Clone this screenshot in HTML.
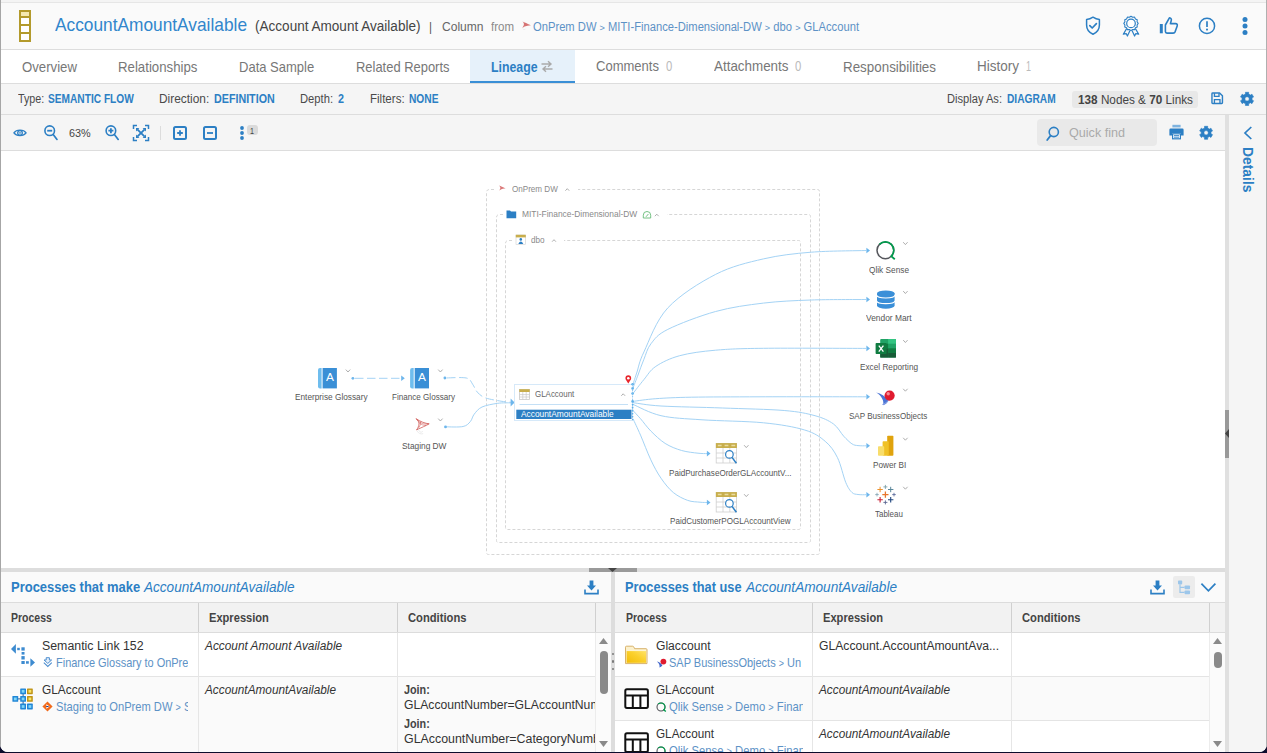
<!DOCTYPE html><html lang="en"><head><meta charset="utf-8"><title>AccountAmountAvailable - Lineage</title><style>

html,body{margin:0;padding:0;}
body{width:1267px;height:753px;overflow:hidden;background:#0c0c2c;font-family:"Liberation Sans",sans-serif;}
#win{position:absolute;left:0;top:0;width:1267px;height:752px;overflow:hidden;background:#fff;border-radius:0 0 8px 8px;}
#win div,#win svg,#win span.t{position:absolute;}
#win svg{overflow:visible;}
span.t{white-space:nowrap;transform-origin:0 0;display:block;}
span.t b{font-weight:bold;}
.gt{font-size:82%;position:relative;top:-0.5px;}
.edgeL{left:0;top:0;width:1px;height:752px;background:#a6a6a6;}
.edgeR{left:1266px;top:0;width:1px;height:752px;background:#b0b0b0;}

</style></head><body><div id="win">
<div style="left:1px;top:0px;width:1265px;height:2px;background:#f4f4f4;"></div>
<div style="left:1px;top:2px;width:1265px;height:1px;background:#e6e6e6;"></div>
<div style="left:1px;top:3px;width:1265px;height:46px;background:#fafafa;"></div>
<div style="left:1px;top:49px;width:1265px;height:1px;background:#dddddd;"></div>
<div style="left:1px;top:50px;width:1265px;height:33px;background:#ffffff;"></div>
<div style="left:1px;top:83px;width:1265px;height:1px;background:#dddddd;"></div>
<div style="left:1px;top:84px;width:1265px;height:30px;background:#f5f5f5;"></div>
<div style="left:1px;top:114px;width:1265px;height:1px;background:#dddddd;"></div>
<div style="left:1px;top:115px;width:1224px;height:35px;background:#f5f5f5;"></div>
<div style="left:1px;top:150px;width:1224px;height:1px;background:#dddddd;"></div>
<div style="left:1225px;top:115px;width:4px;height:638px;background:#e0e0e0;"></div>
<div style="left:1229px;top:115px;width:37px;height:638px;background:#f5f5f5;"></div>
<div style="left:1225px;top:410px;width:4px;height:48px;background:#999999;"></div>
<div style="left:1225px;top:429px;width:4px;height:9px;background:#444;clip-path:polygon(100% 0,0 50%,100% 100%);"></div>
<svg style="left:19px;top:10px;" width="12" height="32" viewBox="0 0 12 32"><rect x="1" y="1" width="10" height="30" fill="#fff" stroke="#b39a2c" stroke-width="2"/><rect x="2" y="2" width="8" height="4" fill="#f5e9b0"/><path d="M1 7H11M1 15H11M1 23H11" stroke="#b39a2c" stroke-width="2"/></svg>
<span class="t" style="left:55px;top:14.03px;font-size:18.5px;line-height:22.2px;color:#3186cc;font-family:'Liberation Sans',sans-serif;transform:scaleX(0.9350);">AccountAmountAvailable</span>
<span class="t" style="left:254.5px;top:18.02px;font-size:14px;line-height:16.8px;color:#444;font-family:'Liberation Sans',sans-serif;transform:scaleX(0.9681);">(Account Amount Available)</span>
<span class="t" style="left:428.5px;top:19.03px;font-size:13px;line-height:15.6px;color:#555;font-family:'Liberation Sans',sans-serif;transform:scaleX(0.8848);">|</span>
<span class="t" style="left:441.5px;top:19.03px;font-size:13px;line-height:15.6px;color:#666;font-family:'Liberation Sans',sans-serif;transform:scaleX(0.9264);">Column</span>
<span class="t" style="left:491px;top:20.04px;font-size:12px;line-height:14.4px;color:#8a8a8a;font-family:'Liberation Sans',sans-serif;transform:scaleX(0.9583);">from</span>
<svg style="left:521px;top:19px;" width="11" height="11" viewBox="0 0 11 11"><path d="M1.4 2.6 C3.2 3.2 6.6 5 9.9 6.3 C7.4 6.5 5.4 6.9 3.6 7.4 L1.3 8.9 C2.4 7.4 3 6.2 2.9 5 C2.8 4 2.2 3.2 1.4 2.6 Z" fill="#cf5a5a" opacity="0.85"/><path d="M1.6 9.6 C2.2 10.6 3.4 10.8 4.4 10.2" fill="none" stroke="#e6e6e6" stroke-width="0.7"/></svg>
<span class="t" style="left:532.5px;top:20.04px;font-size:12px;line-height:14.4px;color:#5d92c6;font-family:'Liberation Sans',sans-serif;transform:scaleX(0.9331);">OnPrem DW <span class="gt">&gt;</span> MITI-Finance-Dimensional-DW <span class="gt">&gt;</span> dbo <span class="gt">&gt;</span> GLAccount</span>
<svg style="left:1084px;top:15px;" width="18" height="21" viewBox="0 0 18 21"><path d="M9 2.2 C6.8 3.6 4.6 4.3 2.6 4.5 V10 C2.6 14.5 5.3 17.6 9 19.3 C12.7 17.6 15.4 14.5 15.4 10 V4.5 C13.4 4.3 11.2 3.6 9 2.2 Z" fill="none" stroke="#2c7fc4" stroke-width="1.5" stroke-linejoin="round"/><path d="M5.8 10.6 L8.2 13 L12.4 8.6" fill="none" stroke="#2c7fc4" stroke-width="1.7" stroke-linecap="round" stroke-linejoin="round"/></svg>
<svg style="left:1121px;top:15px;" width="20" height="22" viewBox="0 0 20 22"><polygon points="10.00,1.20 11.63,2.31 13.60,2.16 14.45,3.95 16.24,4.80 16.09,6.77 17.20,8.40 16.09,10.03 16.24,12.00 14.45,12.85 13.60,14.64 11.63,14.49 10.00,15.60 8.37,14.49 6.40,14.64 5.55,12.85 3.76,12.00 3.91,10.03 2.80,8.40 3.91,6.77 3.76,4.80 5.55,3.95 6.40,2.16 8.37,2.31" fill="none" stroke="#2c7fc4" stroke-width="1.1" stroke-linejoin="round"/><circle cx="10" cy="8.4" r="4.3" fill="#fff" stroke="#2c7fc4" stroke-width="1.2"/><path d="M5.6 13.6 L2.3 19.2 L5.2 18.6 L6.4 21 L9 15.6 M14.4 13.6 L17.7 19.2 L14.8 18.6 L13.6 21 L11 15.6" fill="none" stroke="#2c7fc4" stroke-width="1.2" stroke-linejoin="round"/></svg>
<svg style="left:1159px;top:16px;" width="20" height="19" viewBox="0 0 20 19"><rect x="0.8" y="8" width="3" height="9.3" fill="#2c7fc4"/><path d="M6.4 9 L10.4 1.8 C12.2 2 12.7 3.4 12.2 4.8 L11.4 7.6 H16.6 C18 7.6 18.6 8.7 18.2 9.9 L16.2 15.6 C15.8 16.6 15.1 17.1 14.1 17.1 H8 C7 17.1 6.4 16.5 6.4 15.6 Z" fill="none" stroke="#2c7fc4" stroke-width="1.6" stroke-linejoin="round"/></svg>
<svg style="left:1197px;top:16px;" width="20" height="20" viewBox="0 0 20 20"><circle cx="10" cy="9.9" r="7.6" fill="none" stroke="#2c7fc4" stroke-width="1.5"/><path d="M10 5.3 V11" stroke="#2c7fc4" stroke-width="1.7"/><circle cx="10" cy="13.6" r="1.05" fill="#2c7fc4"/></svg>
<svg style="left:1241px;top:16px;" width="8" height="20" viewBox="0 0 8 20"><circle cx="4" cy="3.5" r="2.5" fill="#2c7fc4"/><circle cx="4" cy="10" r="2.5" fill="#2c7fc4"/><circle cx="4" cy="16.4" r="2.5" fill="#2c7fc4"/></svg>
<div style="left:470px;top:50px;width:105px;height:33px;background:#e6f1fa;"></div>
<div style="left:470px;top:81px;width:105px;height:2px;background:#3a8fd6;"></div>
<span class="t" style="left:21.5px;top:59.02px;font-size:14.3px;line-height:17.16px;color:#777;font-family:'Liberation Sans',sans-serif;transform:scaleX(0.9229);">Overview</span>
<span class="t" style="left:117.5px;top:59.02px;font-size:14.3px;line-height:17.16px;color:#777;font-family:'Liberation Sans',sans-serif;transform:scaleX(0.9261);">Relationships</span>
<span class="t" style="left:238.5px;top:59.02px;font-size:14.3px;line-height:17.16px;color:#777;font-family:'Liberation Sans',sans-serif;transform:scaleX(0.9098);">Data Sample</span>
<span class="t" style="left:355.5px;top:59.02px;font-size:14.3px;line-height:17.16px;color:#777;font-family:'Liberation Sans',sans-serif;transform:scaleX(0.9050);">Related Reports</span>
<span class="t" style="left:490.5px;top:59.02px;font-size:14.3px;line-height:17.16px;color:#2c7fc4;font-family:'Liberation Sans',sans-serif;font-weight:bold;transform:scaleX(0.8606);">Lineage</span>
<svg style="left:541px;top:60px;" width="12" height="13" viewBox="0 0 12 13"><path d="M0.5 4 H9.5 M7 1.2 L10 4 L7 6.8 M11.5 9 H2.5 M5 6.2 L2 9 L5 11.8" fill="none" stroke="#aaa" stroke-width="1.4"/></svg>
<span class="t" style="left:596px;top:58.02px;font-size:14.3px;line-height:17.16px;color:#777;font-family:'Liberation Sans',sans-serif;transform:scaleX(0.9114);">Comments</span>
<span class="t" style="left:665.5px;top:58.02px;font-size:14px;line-height:16.8px;color:#bbb;font-family:'Liberation Sans',sans-serif;transform:scaleX(0.8080);">0</span>
<span class="t" style="left:713.5px;top:58.02px;font-size:14.3px;line-height:17.16px;color:#777;font-family:'Liberation Sans',sans-serif;transform:scaleX(0.9375);">Attachments</span>
<span class="t" style="left:795px;top:58.02px;font-size:14px;line-height:16.8px;color:#bbb;font-family:'Liberation Sans',sans-serif;transform:scaleX(0.8080);">0</span>
<span class="t" style="left:842.5px;top:59.02px;font-size:14.3px;line-height:17.16px;color:#777;font-family:'Liberation Sans',sans-serif;transform:scaleX(0.9361);">Responsibilities</span>
<span class="t" style="left:976.5px;top:58.02px;font-size:14.3px;line-height:17.16px;color:#777;font-family:'Liberation Sans',sans-serif;transform:scaleX(0.9442);">History</span>
<span class="t" style="left:1025.5px;top:58.02px;font-size:14px;line-height:16.8px;color:#bbb;font-family:'Liberation Sans',sans-serif;transform:scaleX(0.6413);">1</span>
<span class="t" style="left:17.5px;top:92.04px;font-size:12px;line-height:14.4px;color:#4a4a4a;font-family:'Liberation Sans',sans-serif;transform:scaleX(0.8924);">Type:</span>
<span class="t" style="left:48.4px;top:92.04px;font-size:12px;line-height:14.4px;color:#2c7fc4;font-family:'Liberation Sans',sans-serif;font-weight:bold;transform:scaleX(0.8468);">SEMANTIC FLOW</span>
<span class="t" style="left:159px;top:92.04px;font-size:12px;line-height:14.4px;color:#4a4a4a;font-family:'Liberation Sans',sans-serif;transform:scaleX(0.9904);">Direction:</span>
<span class="t" style="left:213.5px;top:92.04px;font-size:12px;line-height:14.4px;color:#2c7fc4;font-family:'Liberation Sans',sans-serif;font-weight:bold;transform:scaleX(0.8926);">DEFINITION</span>
<span class="t" style="left:299.6px;top:92.04px;font-size:12px;line-height:14.4px;color:#4a4a4a;font-family:'Liberation Sans',sans-serif;transform:scaleX(0.9333);">Depth:</span>
<span class="t" style="left:338.4px;top:92.04px;font-size:12px;line-height:14.4px;color:#2c7fc4;font-family:'Liberation Sans',sans-serif;font-weight:bold;transform:scaleX(0.8972);">2</span>
<span class="t" style="left:369.6px;top:92.04px;font-size:12px;line-height:14.4px;color:#4a4a4a;font-family:'Liberation Sans',sans-serif;transform:scaleX(0.9611);">Filters:</span>
<span class="t" style="left:409.2px;top:92.04px;font-size:12px;line-height:14.4px;color:#2c7fc4;font-family:'Liberation Sans',sans-serif;font-weight:bold;transform:scaleX(0.8508);">NONE</span>
<span class="t" style="left:947.3px;top:92.04px;font-size:12px;line-height:14.4px;color:#4a4a4a;font-family:'Liberation Sans',sans-serif;transform:scaleX(0.9266);">Display As:</span>
<span class="t" style="left:1007.2px;top:92.04px;font-size:12px;line-height:14.4px;color:#2c7fc4;font-family:'Liberation Sans',sans-serif;font-weight:bold;transform:scaleX(0.8478);">DIAGRAM</span>
<div style="left:1072px;top:91px;width:126px;height:17px;background:#e8e8e8;border-radius:3px;"></div>
<span class="t" style="left:1077.6px;top:92.03px;font-size:12.8px;line-height:15.36px;color:#444;font-family:'Liberation Sans',sans-serif;transform:scaleX(0.9183);"><b>138</b> Nodes &amp; <b>70</b> Links</span>
<svg style="left:1210.6px;top:92.4px;" width="12.4" height="12.4" viewBox="0 0 13 13"><path d="M1.8 1 H9 L12 4 V11.2 Q12 12 11.2 12 H1.8 Q1 12 1 11.2 V1.8 Q1 1 1.8 1 Z" fill="none" stroke="#2c7fc4" stroke-width="1.5" stroke-linejoin="round"/><path d="M3.6 1.2 V4.6 H8.4 V1.2 M3.6 12 V8 H9.4 V12" fill="none" stroke="#2c7fc4" stroke-width="1.4"/></svg>
<svg style="left:1240px;top:92px;" width="15" height="15" viewBox="0 0 15 15"><path fill-rule="evenodd" fill="#2c7fc4" stroke="#2c7fc4" stroke-width="0.6" stroke-linejoin="round" d="M8.63 11.75 L8.70 13.50 L5.40 13.50 L5.47 11.75 L3.64 10.69 L2.16 11.63 L0.51 8.77 L2.06 7.96 L2.06 5.84 L0.51 5.03 L2.16 2.17 L3.64 3.11 L5.47 2.05 L5.40 0.30 L8.70 0.30 L8.63 2.05 L10.46 3.11 L11.94 2.17 L13.59 5.03 L12.04 5.84 L12.04 7.96 L13.59 8.77 L11.94 11.63 L10.46 10.69 Z M9.25 6.90 A2.2 2.2 0 1 0 4.85 6.90 A2.2 2.2 0 1 0 9.25 6.90 Z"/></svg>
<svg style="left:13px;top:128px;" width="15" height="10" viewBox="0 0 15 10"><path d="M0.9 4.9 C3.4 1.2 10.6 1.2 13.1 4.9 C10.6 8.6 3.4 8.6 0.9 4.9 Z" fill="none" stroke="#2c7fc4" stroke-width="1.3"/><circle cx="7" cy="4.9" r="2.3" fill="none" stroke="#2c7fc4" stroke-width="1.3"/><circle cx="7" cy="4.9" r="0.8" fill="#2c7fc4"/></svg>
<svg style="left:43px;top:124px;" width="16" height="17" viewBox="0 0 16 17"><circle cx="6.7" cy="6.7" r="4.8" fill="none" stroke="#2c7fc4" stroke-width="1.6"/><path d="M10.2 10.4 L14 15.4" stroke="#2c7fc4" stroke-width="1.7" stroke-linecap="round"/><path d="M4.2 6.7 H9.2" stroke="#2c7fc4" stroke-width="1.8"/></svg>
<span class="t" style="left:69.3px;top:127.03px;font-size:11.3px;line-height:13.56px;color:#444;font-family:'Liberation Sans',sans-serif;transform:scaleX(0.9591);">63%</span>
<svg style="left:104px;top:124px;" width="16" height="17" viewBox="0 0 16 17"><circle cx="6.9" cy="6.7" r="4.8" fill="none" stroke="#2c7fc4" stroke-width="1.6"/><path d="M10.4 10.4 L14.2 15.4" stroke="#2c7fc4" stroke-width="1.7" stroke-linecap="round"/><path d="M4.4 6.7 H9.4 M6.9 4.2 V9.2" stroke="#2c7fc4" stroke-width="1.8"/></svg>
<svg style="left:132px;top:124px;" width="18" height="18" viewBox="0 0 18 18"><path d="M1.5 5 V1.5 H5 M13 1.5 H16.5 V5 M16.5 13 V16.5 H13 M5 16.5 H1.5 V13" fill="none" stroke="#2c7fc4" stroke-width="1.5"/><path d="M5.6 5.6 L12.4 12.4 M12.4 5.6 L5.6 12.4" stroke="#2c7fc4" stroke-width="1.8"/><path d="M4 4 H7.4 L4 7.4 Z M14 4 V7.4 L10.6 4 Z M14 14 H10.6 L14 10.6 Z M4 14 V10.6 L7.4 14 Z" fill="#2c7fc4"/></svg>
<div style="left:160px;top:126px;width:1px;height:14px;background:#dcdcdc;"></div>
<svg style="left:173px;top:126px;" width="14" height="14" viewBox="0 0 14 14"><rect x="1" y="1" width="12" height="12" rx="1.5" fill="none" stroke="#2c7fc4" stroke-width="2"/><path d="M4.2 7 H9.8 M7 4.2 V9.8" stroke="#2c7fc4" stroke-width="1.8"/></svg>
<svg style="left:203px;top:126px;" width="14" height="14" viewBox="0 0 14 14"><rect x="1" y="1" width="12" height="12" rx="1.5" fill="none" stroke="#2c7fc4" stroke-width="2"/><path d="M4 7 H10" stroke="#2c7fc4" stroke-width="1.8"/></svg>
<svg style="left:239px;top:125px;" width="6" height="16" viewBox="0 0 6 16"><circle cx="3" cy="3" r="1.9" fill="#2c7fc4"/><circle cx="3" cy="8" r="1.9" fill="#2c7fc4"/><circle cx="3" cy="13" r="1.9" fill="#2c7fc4"/></svg>
<div style="left:247px;top:125px;width:11px;height:10px;background:#dadada;border-radius:3px;"></div>
<span class="t" style="left:250.2px;top:125.03px;font-size:9.5px;line-height:11.4px;color:#444;font-family:'Liberation Sans',sans-serif;transform:scaleX(0.7552);">1</span>
<div style="left:1037px;top:119px;width:120px;height:27px;background:#e9e9e9;border-radius:4px;"></div>
<svg style="left:1046px;top:126px;" width="14" height="15" viewBox="0 0 14 15"><circle cx="7.8" cy="6" r="4.6" fill="none" stroke="#2c7fc4" stroke-width="1.6"/><path d="M4.6 9.6 L1.2 14" stroke="#2c7fc4" stroke-width="1.8" stroke-linecap="round"/></svg>
<span class="t" style="left:1069.3px;top:125.02px;font-size:13.5px;line-height:16.2px;color:#aaa;font-family:'Liberation Sans',sans-serif;transform:scaleX(0.9328);">Quick find</span>
<svg style="left:1169px;top:124px;" width="15" height="16" viewBox="0 0 15 16"><rect x="3.4" y="0.8" width="8.2" height="2.6" fill="#7fb3df"/><path d="M1.6 4.6 H13.4 Q14.6 4.6 14.6 5.8 V11.6 H12 V9 H3 V11.6 H0.4 V5.8 Q0.4 4.6 1.6 4.6 Z" fill="#2c7fc4"/><rect x="3.6" y="9.8" width="7.8" height="5" fill="#fff" stroke="#2c7fc4" stroke-width="1.2"/><path d="M5 11.6 H10 M5 13.2 H10" stroke="#2c7fc4" stroke-width="0.9"/></svg>
<svg style="left:1199px;top:126px;" width="14" height="14" viewBox="0 0 14 14"><path fill-rule="evenodd" fill="#2c7fc4" stroke="#2c7fc4" stroke-width="0.6" stroke-linejoin="round" d="M8.65 11.56 L8.73 13.30 L5.47 13.30 L5.55 11.56 L3.75 10.52 L2.28 11.46 L0.66 8.64 L2.21 7.84 L2.21 5.76 L0.66 4.96 L2.28 2.14 L3.75 3.08 L5.55 2.04 L5.47 0.30 L8.73 0.30 L8.65 2.04 L10.45 3.08 L11.92 2.14 L13.54 4.96 L11.99 5.76 L11.99 7.84 L13.54 8.64 L11.92 11.46 L10.45 10.52 Z M9.30 6.80 A2.2 2.2 0 1 0 4.90 6.80 A2.2 2.2 0 1 0 9.30 6.80 Z"/></svg>
<svg style="left:1243px;top:126px;" width="10" height="14" viewBox="0 0 10 14"><path d="M8.3 1 L2 7 L8.3 13" fill="none" stroke="#2c7fc4" stroke-width="1.7"/></svg>
<span style="position:absolute;left:1239.5px;top:146.5px;writing-mode:vertical-rl;font:bold 14.6px/15px 'Liberation Sans',sans-serif;color:#2c7fc4;white-space:nowrap;transform-origin:0 0;transform:scaleY(0.95);">Details</span>
<svg style="left:0px;top:151px;" width="1225" height="417" viewBox="0 151 1225 417"><path d="M494 189.5 H489.5 Q486.5 189.5 486.5 192.5 V552.5 Q486.5 554.5 488.5 554.5 H817.5 Q819.5 554.5 819.5 552.5 V191.5 Q819.5 189.5 817.5 189.5 H578" fill="none" stroke="#d6d6d6" stroke-width="1" stroke-dasharray="3 2"/><path d="M503 214.5 H499.5 Q496.5 214.5 496.5 217.5 V540.5 Q496.5 542.5 498.5 542.5 H808.5 Q810.5 542.5 810.5 540.5 V216.5 Q810.5 214.5 808.5 214.5 H667" fill="none" stroke="#d6d6d6" stroke-width="1" stroke-dasharray="3 2"/><path d="M512 240.5 H508.5 Q505.5 240.5 505.5 243.5 V527.5 Q505.5 529.5 507.5 529.5 H798.5 Q800.5 529.5 800.5 527.5 V242.5 Q800.5 240.5 798.5 240.5 H564" fill="none" stroke="#d6d6d6" stroke-width="1" stroke-dasharray="3 2"/><path d="M633.0 384.3 C633.7 382.2 635.2 377.4 637.0 372.0 C638.8 366.6 638.8 362.7 643.9 352.0 C649.0 341.3 655.8 320.8 667.8 307.9 C679.8 295.0 699.7 282.6 715.6 274.4 C731.5 266.2 747.5 262.6 763.4 258.9 C779.3 255.2 794.1 253.6 811.2 252.2 C828.3 250.8 856.9 250.8 866.0 250.5" fill="none" stroke="#a4d3f5" stroke-width="1"/><path d="M633.0 388.0 C633.8 385.8 636.2 379.8 638.0 375.0 C639.8 370.2 641.7 364.5 643.9 359.3 C646.1 354.1 647.0 348.7 651.0 343.7 C655.0 338.7 657.0 334.8 667.8 329.4 C678.6 324.0 699.7 315.9 715.6 311.5 C731.5 307.1 747.5 305.0 763.4 303.1 C779.3 301.2 794.1 300.6 811.2 300.0 C828.3 299.4 856.9 299.6 866.0 299.5" fill="none" stroke="#a4d3f5" stroke-width="1"/><path d="M633.0 393.5 C634.8 391.2 640.1 384.1 643.9 379.6 C647.7 375.1 649.8 370.4 655.8 366.4 C661.8 362.4 669.7 358.4 679.7 355.7 C689.7 353.0 701.7 351.4 715.6 350.2 C729.5 349.0 738.3 348.6 763.4 348.3 C788.5 348.0 848.9 348.4 866.0 348.4" fill="none" stroke="#a4d3f5" stroke-width="1"/><path d="M633.0 401.4 C636.8 400.9 646.0 399.4 655.8 398.7 C665.6 398.0 674.3 397.5 691.7 397.2 C709.1 396.9 731.0 396.9 760.0 396.8 C789.0 396.7 848.3 396.8 866.0 396.8" fill="none" stroke="#a4d3f5" stroke-width="1"/><path d="M633.0 402.7 C637.7 403.2 646.1 405.1 661.0 406.0 C675.9 406.9 702.1 407.2 722.6 408.0 C743.1 408.8 768.8 409.2 784.2 410.5 C799.6 411.8 806.8 413.5 815.0 415.7 C823.2 417.9 828.6 420.5 833.4 423.9 C838.2 427.3 840.6 432.9 843.7 436.2 C846.8 439.5 849.5 442.2 851.9 443.8 C854.3 445.4 855.6 445.3 858.0 445.6 C860.4 445.9 864.7 445.8 866.0 445.8" fill="none" stroke="#a4d3f5" stroke-width="1"/><path d="M633.0 404.4 C637.7 406.3 649.5 413.1 661.0 415.7 C672.5 418.3 684.9 418.6 702.0 419.8 C719.1 421.0 746.5 421.1 763.6 422.8 C780.7 424.5 794.4 426.9 804.7 430.0 C815.0 433.1 819.7 436.7 825.2 441.3 C830.7 445.9 834.1 450.9 837.5 457.7 C840.9 464.5 843.3 476.5 845.7 482.3 C848.1 488.1 849.9 490.4 851.9 492.4 C853.9 494.4 855.6 494.1 858.0 494.5 C860.4 494.9 864.7 494.7 866.0 494.7" fill="none" stroke="#a4d3f5" stroke-width="1"/><path d="M633.0 410.5 C634.2 411.9 637.5 415.3 640.5 418.7 C643.5 422.1 646.7 426.9 650.8 431.0 C654.9 435.1 660.0 440.1 665.1 443.4 C670.2 446.6 676.1 448.9 681.6 450.5 C687.1 452.1 693.8 452.7 698.0 453.2 C702.2 453.7 705.5 453.5 707.0 453.6" fill="none" stroke="#a4d3f5" stroke-width="1"/><path d="M633.0 418.7 C634.2 421.4 637.5 428.2 640.5 435.1 C643.5 442.0 647.4 452.6 650.8 459.8 C654.2 467.0 657.2 472.7 661.0 478.2 C664.8 483.7 668.9 488.9 673.4 492.6 C677.9 496.3 683.3 498.8 687.7 500.4 C692.1 502.0 696.8 501.8 700.0 502.2 C703.2 502.6 705.8 502.4 707.0 502.5" fill="none" stroke="#a4d3f5" stroke-width="1"/><path d="M866.4 247.7 L870 250.5 L866.4 253.3 Z" fill="#6db6ec"/><path d="M866.4 296.7 L870 299.5 L866.4 302.3 Z" fill="#6db6ec"/><path d="M866.4 345.59999999999997 L870 348.4 L866.4 351.2 Z" fill="#6db6ec"/><path d="M866.4 394.0 L870 396.8 L866.4 399.6 Z" fill="#6db6ec"/><path d="M866.4 443.0 L870 445.8 L866.4 448.6 Z" fill="#6db6ec"/><path d="M866.4 491.9 L870 494.7 L866.4 497.5 Z" fill="#6db6ec"/><path d="M706.9 450.8 L710.5 453.6 L706.9 456.40000000000003 Z" fill="#6db6ec"/><path d="M706.9 499.7 L710.5 502.5 L706.9 505.3 Z" fill="#6db6ec"/><path d="M353 378.3 H401" fill="none" stroke="#a4d3f5" stroke-width="1" stroke-dasharray="8.5 3.5" stroke-dashoffset="-2"/><path d="M401.2 375.5 L404.8 378.3 L401.2 381.1 Z" fill="#6db6ec"/><circle cx="352.9" cy="378.3" r="1.4" fill="#6db6ec"/><path d="M445.0 378.0 C448.6 378.0 461.7 377.0 466.3 378.0 C470.9 379.0 470.8 381.8 472.6 384.2 C474.4 386.6 475.2 389.8 477.3 392.1 C479.4 394.4 481.2 396.3 485.2 397.8 C489.1 399.3 496.7 400.4 501.0 401.2 C505.3 401.9 509.3 402.1 511.0 402.3" fill="none" stroke="#a4d3f5" stroke-width="1" stroke-dasharray="8.5 3.5" stroke-dashoffset="-2"/><circle cx="444.9" cy="378" r="1.4" fill="#6db6ec"/><path d="M445.7 426.8 C448.6 426.8 459.0 427.4 463.1 426.5 C467.2 425.6 468.5 423.6 470.4 421.5 C472.2 419.4 472.3 416.6 474.2 414.2 C476.1 411.8 478.1 408.8 482.0 407.0 C485.9 405.2 493.0 404.0 497.8 403.3 C502.6 402.6 508.8 402.9 511.0 402.8" fill="none" stroke="#a4d3f5" stroke-width="1"/><circle cx="445.5" cy="426.9" r="1.4" fill="#6db6ec"/><path d="M510.6 398.6 L514.6 402.6 L510.6 406.6 Z" fill="#6db6ec"/><rect x="514.5" y="384.5" width="118" height="36" fill="#fff" stroke="#d6e9f9" stroke-width="1"/><path d="M519.5 404.5 H628" stroke="#c4e0f6" stroke-width="1"/><rect x="516.3" y="409.7" width="115.2" height="9.3" fill="#2c7fc4"/><circle cx="632.6" cy="384.3" r="1.3" fill="#5eb0ea"/><circle cx="632.6" cy="388.4" r="1.3" fill="#5eb0ea"/><circle cx="632.6" cy="393.5" r="1.3" fill="#5eb0ea"/><circle cx="632.6" cy="401.4" r="1.3" fill="#5eb0ea"/><circle cx="632.6" cy="404.6" r="0.9" fill="#5eb0ea"/><circle cx="632.6" cy="407.4" r="0.9" fill="#5eb0ea"/><circle cx="632.6" cy="410.4" r="0.9" fill="#5eb0ea"/><circle cx="632.6" cy="413.5" r="0.8" fill="#5eb0ea"/><circle cx="632.6" cy="416.5" r="0.8" fill="#5eb0ea"/><circle cx="632.6" cy="419.5" r="0.8" fill="#5eb0ea"/><path d="M632.6 384 V420" stroke="#7cc0ee" stroke-width="0.8" stroke-dasharray="1 2"/><path d="M628.3 383.6 C627 381 625.4 379.8 625.4 378.2 A2.9 2.9 0 0 1 631.2 378.2 C631.2 379.8 629.6 381 628.3 383.6 Z" fill="#e8262d"/><circle cx="628.3" cy="378.2" r="1.3" fill="#fff"/><rect x="519.5" y="389.5" width="10" height="10" fill="#fff" stroke="#c9c9c9" stroke-width="0.8"/><rect x="519.3" y="389.2" width="10.4" height="2.8" fill="#c8ae4c"/><path d="M519.5 394.6 H529.5 M519.5 397 H529.5 M522.8 392 V399.5 M526.2 392 V399.5" stroke="#c9c9c9" stroke-width="0.7"/><path d="M621.3000000000001 395.8 L623.2 393.8 L625.1 395.8" fill="none" stroke="#999" stroke-width="0.8"/><path d="M565.4 190.7 L567.3 188.7 L569.1999999999999 190.7" fill="none" stroke="#999" stroke-width="0.8"/><path d="M654.9 216.2 L656.8 214.2 L658.6999999999999 216.2" fill="none" stroke="#999" stroke-width="0.8"/><path d="M552.1 241.7 L554 239.7 L555.9 241.7" fill="none" stroke="#999" stroke-width="0.8"/><path d="M345.8 369.6 L348 372.0 L350.2 369.6" fill="none" stroke="#999" stroke-width="0.8"/><path d="M438.2 369.6 L440.4 372.0 L442.59999999999997 369.6" fill="none" stroke="#999" stroke-width="0.8"/><path d="M438.2 418.6 L440.4 421.0 L442.59999999999997 418.6" fill="none" stroke="#999" stroke-width="0.8"/><path d="M903.1999999999999 242.20000000000002 L905.4 244.6 L907.6 242.20000000000002" fill="none" stroke="#999" stroke-width="0.8"/><path d="M903.1999999999999 291.1 L905.4 293.5 L907.6 291.1" fill="none" stroke="#999" stroke-width="0.8"/><path d="M903.1999999999999 340.1 L905.4 342.5 L907.6 340.1" fill="none" stroke="#999" stroke-width="0.8"/><path d="M903.1999999999999 388.8 L905.4 391.2 L907.6 388.8" fill="none" stroke="#999" stroke-width="0.8"/><path d="M903.1999999999999 437.8 L905.4 440.2 L907.6 437.8" fill="none" stroke="#999" stroke-width="0.8"/><path d="M903.1999999999999 486.8 L905.4 489.2 L907.6 486.8" fill="none" stroke="#999" stroke-width="0.8"/><path d="M744.0999999999999 445.2 L746.3 447.59999999999997 L748.5 445.2" fill="none" stroke="#999" stroke-width="0.8"/><path d="M744.0999999999999 494.2 L746.3 496.59999999999997 L748.5 494.2" fill="none" stroke="#999" stroke-width="0.8"/><path d="M499 185.6 C500.6 186 503 187.4 505.6 188.4 C503.6 188.5 502.2 188.8 501 189.4 L499.2 190.6 C500 189.4 500.4 188.6 500.3 187.6 C500.2 186.8 499.7 186.1 499 185.6 Z" fill="#d35f5f" opacity="0.85"/><path d="M506.5 210.4 H510 L511 211.6 H516.2 V218.3 H506.5 Z" fill="#2c7fc4"/><path d="M643.3 218 V215.2 A3.7 3.7 0 0 1 650.7 215.2 V218 Z" fill="none" stroke="#66bb77" stroke-width="0.9" stroke-linejoin="round"/><path d="M646 216.8 L648.4 214" stroke="#66bb77" stroke-width="0.9"/><rect x="516" y="235" width="9.6" height="9.6" fill="#fff" stroke="#cfcfcf" stroke-width="0.6"/><rect x="515.8" y="234.8" width="10" height="2.6" fill="#c8ae4c"/><circle cx="520.8" cy="239.4" r="1.3" fill="#2c7fc4"/><path d="M518.3 244 Q520.8 239.2 523.3 244 Z" fill="#2c7fc4"/><path d="M320 368 H321.6 V388.4 H320 Q318 388.4 318 386.4 V370 Q318 368 320 368 Z" fill="#6fbdee"/><rect x="322.6" y="368" width="14.3" height="20.4" fill="#3a8fd6"/><path d="M412.1 368 H413.70000000000005 V388.4 H412.1 Q410.1 388.4 410.1 386.4 V370 Q410.1 368 412.1 368 Z" fill="#6fbdee"/><rect x="414.70000000000005" y="368" width="14.3" height="20.4" fill="#3a8fd6"/><path d="M416 418.6 C420 421.5 425.5 423.6 429.2 423.8 C426.5 425.6 421 427.6 416.6 430 C418.6 426.8 419.4 424.6 418.8 422 Z" fill="none" stroke="#cc4a45" stroke-width="0.8" opacity="0.9"/><path d="M417.4 419.6 C420 423.2 424 424.6 428.6 423.9 M418.6 422.4 C421 424.6 423.6 425.6 426 425.4 M416.8 429.8 C419.6 427.4 420.8 424.8 420.6 421.6" fill="none" stroke="#cc4a45" stroke-width="0.6" opacity="0.85"/><path d="M417 431 C418.6 433.6 421 434.4 423.2 433.6 M418 428.4 C419 432 421.4 433.4 423 431" fill="none" stroke="#e4e4e4" stroke-width="0.7"/><circle cx="885.4" cy="250.3" r="8.4" fill="none" stroke="#54565b" stroke-width="1.5"/><path d="M879.46 244.36 A8.4 8.4 0 0 1 891.34 256.24" fill="none" stroke="#009c4d" stroke-width="1.6"/><path d="M890.6 255.6 L894.8 259.2" stroke="#009c4d" stroke-width="1.8"/><path d="M877 293.3 V305.8 A8.8 2.9 0 0 0 894.6 305.8 V293.3 A8.8 2.9 0 0 0 877 293.3 Z" fill="#3a8fd8"/><path d="M876.6 295.2 C877.4 299 894.2 299 895 295.2 M876.6 300.8 C877.4 304.6 894.2 304.6 895 300.8" fill="none" stroke="#fff" stroke-width="1.1"/><rect x="880.2" y="339" width="15.8" height="18.6" rx="1" fill="#21a366"/><rect x="888.1" y="339" width="7.9" height="4.7" fill="#33c481"/><rect x="880.2" y="343.7" width="7.9" height="4.6" fill="#107c41"/><rect x="888.1" y="348.3" width="7.9" height="4.7" fill="#107c41"/><rect x="880.2" y="348.3" width="7.9" height="9.3" fill="#185c37"/><rect x="888.1" y="353" width="7.9" height="4.6" fill="#185c37"/><rect x="875.6" y="343" width="11" height="11" rx="0.8" fill="#107c41"/><path d="M878.8 345.6 L883.4 351.6 M883.4 345.6 L878.8 351.6" stroke="#fff" stroke-width="1.3"/><path d="M876.2 392.6 C881 393.6 885 396.6 888.6 400.4 C887.6 402.6 885.6 404.4 883 405.2 C884.4 401.4 881.8 396 876.2 392.6 Z" fill="#4a74d6"/><path d="M882 404.6 C885 404 887.4 402 888.6 400 " stroke="#9fb3ea" stroke-width="0.8" fill="none"/><circle cx="889.6" cy="395.6" r="5.1" fill="#e01b2f"/><circle cx="888.2" cy="393.8" r="1.7" fill="#f68a94"/><rect x="887.2" y="435.8" width="6.2" height="20" rx="0.8" fill="#e0a30d"/><rect x="882.6" y="441.2" width="6.2" height="14.6" rx="0.8" fill="#f0c126"/><rect x="878" y="446.2" width="6.2" height="9.6" rx="0.8" fill="#f8dd6b"/><path d="M882.3 494.6 H888.5 M885.4 491.5 V497.70000000000005" stroke="#e8762d" stroke-width="1.3"/><path d="M883.4 486.9 H887.4 M885.4 484.9 V488.9" stroke="#7aa0a8" stroke-width="0.9"/><path d="M883.4 502.4 H887.4 M885.4 500.4 V504.4" stroke="#5a6591" stroke-width="0.9"/><path d="M877.4 489.5 H882.8000000000001 M880.1 486.8 V492.2" stroke="#eb912c" stroke-width="1.0"/><path d="M888.0 489.5 H893.4000000000001 M890.7 486.8 V492.2" stroke="#59879b" stroke-width="1.0"/><path d="M877.4 499.8 H882.8000000000001 M880.1 497.1 V502.5" stroke="#c72035" stroke-width="1.1"/><path d="M888.0 499.8 H893.4000000000001 M890.7 497.1 V502.5" stroke="#1f457e" stroke-width="1.1"/><path d="M875.2 494.6 H878.8 M877 492.8 V496.40000000000003" stroke="#7d9fb0" stroke-width="0.8"/><path d="M892.2 494.6 H895.8 M894 492.8 V496.40000000000003" stroke="#4f5f94" stroke-width="0.8"/><rect x="716.2" y="443.4" width="20.4" height="19.6" fill="#fff" stroke="#cfcfcf" stroke-width="0.8"/><path d="M716.2 453.0 H736.6 M716.2 458.0 H736.6 M723.0 448.0 V463.0 M729.8000000000001 448.0 V463.0" stroke="#cfcfcf" stroke-width="0.8"/><rect x="715.9000000000001" y="443.09999999999997" width="21" height="4.9" fill="#c8ae4c"/><path d="M717.8000000000001 445.5 H721.6 M724.6 445.5 H728.4000000000001 M731.4000000000001 445.5 H735.2" stroke="#e9dca0" stroke-width="1.3"/><circle cx="729.4000000000001" cy="454.4" r="3.8" fill="#fff" stroke="#2c7fc4" stroke-width="1.2"/><path d="M732.0 457.4 L736.4000000000001 463.2" stroke="#2c7fc4" stroke-width="1.5"/><rect x="716.2" y="492.4" width="20.4" height="19.6" fill="#fff" stroke="#cfcfcf" stroke-width="0.8"/><path d="M716.2 502.0 H736.6 M716.2 507.0 H736.6 M723.0 497.0 V512.0 M729.8000000000001 497.0 V512.0" stroke="#cfcfcf" stroke-width="0.8"/><rect x="715.9000000000001" y="492.09999999999997" width="21" height="4.9" fill="#c8ae4c"/><path d="M717.8000000000001 494.5 H721.6 M724.6 494.5 H728.4000000000001 M731.4000000000001 494.5 H735.2" stroke="#e9dca0" stroke-width="1.3"/><circle cx="729.4000000000001" cy="503.4" r="3.8" fill="#fff" stroke="#2c7fc4" stroke-width="1.2"/><path d="M732.0 506.4 L736.4000000000001 512.1999999999999" stroke="#2c7fc4" stroke-width="1.5"/></svg>
<span class="t" style="left:512px;top:184.02px;font-size:8.4px;line-height:10.08px;color:#8a8a8a;font-family:'Liberation Sans',sans-serif;transform:scaleX(0.9648);">OnPrem DW</span>
<span class="t" style="left:521.5px;top:209.03px;font-size:8.4px;line-height:10.08px;color:#8a8a8a;font-family:'Liberation Sans',sans-serif;transform:scaleX(1.0030);">MITI-Finance-Dimensional-DW</span>
<span class="t" style="left:531px;top:235.02px;font-size:8.4px;line-height:10.08px;color:#8a8a8a;font-family:'Liberation Sans',sans-serif;transform:scaleX(0.9725);">dbo</span>
<span class="t" style="left:294.8px;top:392.02px;font-size:8.6px;line-height:10.32px;color:#555;font-family:'Liberation Sans',sans-serif;transform:scaleX(0.9620);">Enterprise Glossary</span>
<span class="t" style="left:391.8px;top:392.02px;font-size:8.6px;line-height:10.32px;color:#555;font-family:'Liberation Sans',sans-serif;transform:scaleX(0.9421);">Finance Glossary</span>
<span class="t" style="left:401.5px;top:441.02px;font-size:8.6px;line-height:10.32px;color:#555;font-family:'Liberation Sans',sans-serif;transform:scaleX(0.9704);">Staging DW</span>
<span class="t" style="left:535px;top:389.03px;font-size:8.8px;line-height:10.56px;color:#666;font-family:'Liberation Sans',sans-serif;transform:scaleX(0.9028);">GLAccount</span>
<span class="t" style="left:521.3px;top:409.03px;font-size:8.8px;line-height:10.56px;color:#fff;font-family:'Liberation Sans',sans-serif;transform:scaleX(0.9492);">AccountAmountAvailable</span>
<span class="t" style="left:326.1px;top:371.03px;font-size:11px;line-height:13.2px;color:#fff;font-family:'Liberation Sans',sans-serif;transform:scaleX(1.0757);">A</span>
<span class="t" style="left:418.2px;top:371.03px;font-size:11px;line-height:13.2px;color:#fff;font-family:'Liberation Sans',sans-serif;transform:scaleX(1.0757);">A</span>
<span class="t" style="left:869px;top:265.02px;font-size:8.6px;line-height:10.32px;color:#555;font-family:'Liberation Sans',sans-serif;transform:scaleX(0.9624);">Qlik Sense</span>
<span class="t" style="left:865.6px;top:313.03px;font-size:8.6px;line-height:10.32px;color:#555;font-family:'Liberation Sans',sans-serif;transform:scaleX(0.9762);">Vendor Mart</span>
<span class="t" style="left:859.9px;top:362.03px;font-size:8.6px;line-height:10.32px;color:#555;font-family:'Liberation Sans',sans-serif;transform:scaleX(0.9576);">Excel Reporting</span>
<span class="t" style="left:849.4px;top:411.02px;font-size:8.6px;line-height:10.32px;color:#555;font-family:'Liberation Sans',sans-serif;transform:scaleX(0.9372);">SAP BusinessObjects</span>
<span class="t" style="left:872.5px;top:460.02px;font-size:8.6px;line-height:10.32px;color:#555;font-family:'Liberation Sans',sans-serif;transform:scaleX(0.9520);">Power BI</span>
<span class="t" style="left:874.9px;top:509.02px;font-size:8.6px;line-height:10.32px;color:#555;font-family:'Liberation Sans',sans-serif;transform:scaleX(0.9266);">Tableau</span>
<span class="t" style="left:668.5px;top:468.02px;font-size:8.6px;line-height:10.32px;color:#555;font-family:'Liberation Sans',sans-serif;transform:scaleX(0.9416);">PaidPurchaseOrderGLAccountV...</span>
<span class="t" style="left:669.5px;top:516.02px;font-size:8.6px;line-height:10.32px;color:#555;font-family:'Liberation Sans',sans-serif;transform:scaleX(0.9424);">PaidCustomerPOGLAccountView</span>
<div style="left:1px;top:568px;width:1224px;height:4px;background:#dddddd;"></div>
<div style="left:589px;top:568px;width:48px;height:4px;background:#9a9a9a;"></div>
<div style="left:608px;top:568px;width:9px;height:4px;background:#444;clip-path:polygon(0 0,100% 0,50% 100%);"></div>
<div style="left:1px;top:572px;width:610px;height:30px;background:#fafafa;"></div>
<div style="left:1px;top:602px;width:610px;height:1px;background:#dcdcdc;"></div>
<div style="left:1px;top:603px;width:610px;height:29px;background:#f2f2f2;"></div>
<div style="left:1px;top:632px;width:610px;height:1px;background:#dcdcdc;"></div>
<div style="left:198px;top:603px;width:1px;height:150px;background:#dcdcdc;"></div>
<div style="left:397px;top:603px;width:1px;height:150px;background:#dcdcdc;"></div>
<div style="left:595px;top:603px;width:1px;height:29px;background:#d0d0d0;"></div>
<div style="left:1px;top:633px;width:594px;height:43px;background:#ffffff;"></div>
<div style="left:1px;top:676px;width:594px;height:1px;background:#e4e4e4;"></div>
<div style="left:1px;top:677px;width:594px;height:76px;background:#fafafa;"></div>
<div style="left:595px;top:633px;width:16px;height:120px;background:#fbfbfb;"></div>
<div style="left:611px;top:572px;width:4px;height:181px;background:#dddddd;"></div>
<div style="left:615px;top:572px;width:610px;height:30px;background:#fafafa;"></div>
<div style="left:615px;top:602px;width:610px;height:1px;background:#dcdcdc;"></div>
<div style="left:615px;top:603px;width:610px;height:29px;background:#f2f2f2;"></div>
<div style="left:615px;top:632px;width:610px;height:1px;background:#dcdcdc;"></div>
<div style="left:812px;top:603px;width:1px;height:150px;background:#dcdcdc;"></div>
<div style="left:1011px;top:603px;width:1px;height:150px;background:#dcdcdc;"></div>
<div style="left:1209px;top:603px;width:1px;height:29px;background:#d0d0d0;"></div>
<div style="left:615px;top:633px;width:594px;height:43px;background:#ffffff;"></div>
<div style="left:615px;top:676px;width:594px;height:1px;background:#e4e4e4;"></div>
<div style="left:615px;top:677px;width:594px;height:43px;background:#fafafa;"></div>
<div style="left:615px;top:720px;width:594px;height:1px;background:#e4e4e4;"></div>
<div style="left:615px;top:721px;width:594px;height:32px;background:#ffffff;"></div>
<div style="left:1209px;top:633px;width:16px;height:120px;background:#fbfbfb;"></div>
<div style="left:198px;top:603px;width:1px;height:29px;background:#d0d0d0;"></div>
<div style="left:198px;top:633px;width:1px;height:120px;background:#e6e6e6;"></div>
<div style="left:397px;top:603px;width:1px;height:29px;background:#d0d0d0;"></div>
<div style="left:397px;top:633px;width:1px;height:120px;background:#e6e6e6;"></div>
<div style="left:812px;top:603px;width:1px;height:29px;background:#d0d0d0;"></div>
<div style="left:812px;top:633px;width:1px;height:120px;background:#e6e6e6;"></div>
<div style="left:1011px;top:603px;width:1px;height:29px;background:#d0d0d0;"></div>
<div style="left:1011px;top:633px;width:1px;height:120px;background:#e6e6e6;"></div>
<div style="left:595px;top:633px;width:1px;height:120px;background:#ececec;"></div>
<div style="left:1209px;top:633px;width:1px;height:120px;background:#ececec;"></div>
<div style="left:612px;top:652.9px;width:2.2px;height:2.2px;background:#7a7a7a;border-radius:50%;"></div>
<div style="left:612px;top:660.4px;width:2.2px;height:2.2px;background:#7a7a7a;border-radius:50%;"></div>
<div style="left:612px;top:667.9px;width:2.2px;height:2.2px;background:#7a7a7a;border-radius:50%;"></div>
<div style="left:599px;top:638px;width:9px;height:6px;background:#8a8a8a;clip-path:polygon(50% 0,100% 100%,0 100%);"></div>
<div style="left:599.5px;top:651px;width:8px;height:43px;background:#8a8a8a;border-radius:4px;"></div>
<div style="left:599px;top:741px;width:9px;height:6px;background:#8a8a8a;clip-path:polygon(0 0,100% 0,50% 100%);"></div>
<div style="left:1213px;top:638px;width:9px;height:6px;background:#8a8a8a;clip-path:polygon(50% 0,100% 100%,0 100%);"></div>
<div style="left:1213.5px;top:651.5px;width:8px;height:16.5px;background:#8a8a8a;border-radius:4px;"></div>
<div style="left:1213px;top:741px;width:9px;height:6px;background:#8a8a8a;clip-path:polygon(0 0,100% 0,50% 100%);"></div>
<span class="t" style="left:10.6px;top:579.02px;font-size:14.8px;line-height:17.76px;color:#2c7fc4;font-family:'Liberation Sans',sans-serif;font-weight:bold;transform:scaleX(0.8775);">Processes that make</span>
<span class="t" style="left:144.4px;top:579.02px;font-size:14.8px;line-height:17.76px;color:#2c7fc4;font-family:'Liberation Sans',sans-serif;font-style:italic;transform:scaleX(0.9169);">AccountAmountAvailable</span>
<span class="t" style="left:624.5px;top:579.02px;font-size:14.8px;line-height:17.76px;color:#2c7fc4;font-family:'Liberation Sans',sans-serif;font-weight:bold;transform:scaleX(0.8637);">Processes that use</span>
<span class="t" style="left:746px;top:579.02px;font-size:14.8px;line-height:17.76px;color:#2c7fc4;font-family:'Liberation Sans',sans-serif;font-style:italic;transform:scaleX(0.9193);">AccountAmountAvailable</span>
<svg style="left:583.5px;top:579.6px;" width="15" height="15" viewBox="0 0 15 15"><path d="M5.6 0.6 H9.4 V5.6 H12 L7.5 10.4 L3 5.6 H5.6 Z" fill="#2c7fc4"/><path d="M1 9.6 V13.6 H14 V9.6" fill="none" stroke="#2c7fc4" stroke-width="1.6"/></svg>
<svg style="left:1149.6px;top:579.6px;" width="15" height="15" viewBox="0 0 15 15"><path d="M5.6 0.6 H9.4 V5.6 H12 L7.5 10.4 L3 5.6 H5.6 Z" fill="#2c7fc4"/><path d="M1 9.6 V13.6 H14 V9.6" fill="none" stroke="#2c7fc4" stroke-width="1.6"/></svg>
<div style="left:1173px;top:576px;width:22px;height:22px;background:#ececec;border-radius:2px;"></div>
<svg style="left:1177px;top:580px;" width="14" height="15" viewBox="0 0 14 15"><rect x="1" y="0.6" width="4.2" height="3.8" rx="0.8" fill="#9cc6ea"/><rect x="7.6" y="5.4" width="5.4" height="3.8" rx="0.8" fill="#9cc6ea"/><rect x="7.6" y="10.4" width="5.4" height="3.8" rx="0.8" fill="#9cc6ea"/><path d="M3 4.4 V12.3 H7.6 M3 7.3 H7.6" fill="none" stroke="#9cc6ea" stroke-width="1.2"/></svg>
<svg style="left:1200px;top:582px;" width="17" height="11" viewBox="0 0 17 11"><path d="M1.4 1.6 L8.4 8.8 L15.4 1.6" fill="none" stroke="#2c7fc4" stroke-width="1.7"/></svg>
<span class="t" style="left:11.4px;top:610.03px;font-size:12.8px;line-height:15.36px;color:#444;font-family:'Liberation Sans',sans-serif;font-weight:bold;transform:scaleX(0.8191);">Process</span>
<span class="t" style="left:209.3px;top:610.03px;font-size:12.8px;line-height:15.36px;color:#444;font-family:'Liberation Sans',sans-serif;font-weight:bold;transform:scaleX(0.8681);">Expression</span>
<span class="t" style="left:408.3px;top:610.03px;font-size:12.8px;line-height:15.36px;color:#444;font-family:'Liberation Sans',sans-serif;font-weight:bold;transform:scaleX(0.8754);">Conditions</span>
<span class="t" style="left:625.5px;top:610.03px;font-size:12.8px;line-height:15.36px;color:#444;font-family:'Liberation Sans',sans-serif;font-weight:bold;transform:scaleX(0.8211);">Process</span>
<span class="t" style="left:823.2px;top:610.03px;font-size:12.8px;line-height:15.36px;color:#444;font-family:'Liberation Sans',sans-serif;font-weight:bold;transform:scaleX(0.8696);">Expression</span>
<span class="t" style="left:1022.3px;top:610.03px;font-size:12.8px;line-height:15.36px;color:#444;font-family:'Liberation Sans',sans-serif;font-weight:bold;transform:scaleX(0.8754);">Conditions</span>
<svg style="left:10px;top:643px;" width="26" height="25" viewBox="0 0 26 25"><g fill="#3d8bd0"><path d="M1 5.9 L5.9 1 V10.8 Z"/><path d="M20.4 15.2 L25 19.5 L20.4 23.8 Z"/><rect x="7.2" y="4.8" width="2.6" height="2.4"/><rect x="11.4" y="4.3" width="3.3" height="3.3"/><rect x="11.6" y="9" width="2.9" height="2.6"/><rect x="11.4" y="13.1" width="3.3" height="3.4"/><rect x="11.4" y="18" width="3.3" height="3"/><rect x="16" y="18.2" width="2.8" height="2.5"/></g></svg>
<span class="t" style="left:42.2px;top:638.02px;font-size:13.7px;line-height:16.44px;color:#333;font-family:'Liberation Sans',sans-serif;transform:scaleX(0.9022);">Semantic Link 152</span>
<svg style="left:43px;top:657px;" width="10" height="10" viewBox="0 0 10 10"><path d="M3.2 0.7 H6.4 V3 H8.6 L4.8 6.4 L1 3 H3.2 Z" fill="#e4effa" stroke="#4f8fcf" stroke-width="1" stroke-linejoin="round"/><path d="M0.8 5.6 L4.8 9.4 L8.8 5.6" fill="none" stroke="#4f8fcf" stroke-width="1.1"/></svg>
<div style="left:55.5px;top:655.02px;width:132.6px;height:17.6px;overflow:hidden;"><span class="t" style="left:0;top:0;font-size:13px;line-height:15.6px;color:#5d92c6;font-family:'Liberation Sans',sans-serif;transform:scaleX(0.8441);">Finance Glossary to OnPrem</span></div>
<span class="t" style="left:205.2px;top:638.02px;font-size:13.7px;line-height:16.44px;color:#333;font-family:'Liberation Sans',sans-serif;font-style:italic;transform:scaleX(0.8649);">Account Amount Available</span>
<svg style="left:12px;top:688px;" width="22" height="22" viewBox="0 0 22 22"><path d="M5 10.9 H10 M11.1 4 V18" stroke="#2f5f8f" stroke-width="1"/><rect x="8.2" y="0.4" width="5.8" height="5.8" rx="0.6" fill="#2186d6"/><rect x="9.7" y="1.9" width="2.8" height="2.8" fill="#7fd6f8"/><rect x="15" y="0.4" width="5.8" height="5.8" rx="0.6" fill="#bf9316"/><rect x="16.5" y="1.9" width="2.8" height="2.8" fill="#f8e468"/><rect x="0.4" y="8" width="5.8" height="5.8" rx="0.6" fill="#2186d6"/><rect x="1.9" y="9.5" width="2.8" height="2.8" fill="#7fd6f8"/><rect x="8.2" y="8" width="5.8" height="5.8" rx="0.6" fill="#2186d6"/><rect x="9.7" y="9.5" width="2.8" height="2.8" fill="#7fd6f8"/><rect x="15" y="8" width="5.8" height="5.8" rx="0.6" fill="#bf9316"/><rect x="16.5" y="9.5" width="2.8" height="2.8" fill="#f8e468"/><rect x="8.2" y="15.6" width="5.8" height="5.8" rx="0.6" fill="#2186d6"/><rect x="9.7" y="17.1" width="2.8" height="2.8" fill="#7fd6f8"/><rect x="15" y="15.6" width="5.8" height="5.8" rx="0.6" fill="#2186d6"/><rect x="16.5" y="17.1" width="2.8" height="2.8" fill="#7fd6f8"/></svg>
<span class="t" style="left:42.2px;top:682.02px;font-size:13.7px;line-height:16.44px;color:#333;font-family:'Liberation Sans',sans-serif;transform:scaleX(0.8683);">GLAccount</span>
<svg style="left:42px;top:701px;" width="11" height="11" viewBox="0 0 11 11"><path d="M5.5 0.4 L10.6 5.5 L5.5 10.6 L0.4 5.5 Z" fill="#f26a1b"/><path d="M4.4 3.2 L7.6 5.5 L4.4 7.8 Z" fill="#fff"/><path d="M4.2 5.5 H6.6" stroke="#1d3f8f" stroke-width="1"/></svg>
<div style="left:55.5px;top:699.02px;width:132.4px;height:17.6px;overflow:hidden;"><span class="t" style="left:0;top:0;font-size:13px;line-height:15.6px;color:#5d92c6;font-family:'Liberation Sans',sans-serif;transform:scaleX(0.8571);">Staging to OnPrem DW <span class="gt">&gt;</span> St</span></div>
<span class="t" style="left:205.2px;top:682.02px;font-size:13.7px;line-height:16.44px;color:#333;font-family:'Liberation Sans',sans-serif;font-style:italic;transform:scaleX(0.8622);">AccountAmountAvailable</span>
<span class="t" style="left:404.2px;top:682.03px;font-size:12.8px;line-height:15.36px;color:#444;font-family:'Liberation Sans',sans-serif;font-weight:bold;transform:scaleX(0.8437);">Join:</span>
<div style="left:404.2px;top:697.03px;width:190.8px;height:18.44px;overflow:hidden;"><span class="t" style="left:0;top:0;font-size:13.7px;line-height:16.44px;color:#333;font-family:'Liberation Sans',sans-serif;transform:scaleX(0.8892);">GLAccountNumber=GLAccountNumb</span></div>
<span class="t" style="left:404.2px;top:716.03px;font-size:12.8px;line-height:15.36px;color:#444;font-family:'Liberation Sans',sans-serif;font-weight:bold;transform:scaleX(0.8437);">Join:</span>
<div style="left:404.2px;top:731.02px;width:190.8px;height:18.44px;overflow:hidden;"><span class="t" style="left:0;top:0;font-size:13.7px;line-height:16.44px;color:#333;font-family:'Liberation Sans',sans-serif;transform:scaleX(0.9051);">GLAccountNumber=CategoryNumbe</span></div>
<svg style="left:624px;top:645px;" width="25" height="20" viewBox="0 0 25 20"><defs><linearGradient id="fg" x1="0" y1="1" x2="1" y2="0"><stop offset="0" stop-color="#f3bd08"/><stop offset="0.55" stop-color="#fbd02c"/><stop offset="1" stop-color="#ffe36a"/></linearGradient></defs><path d="M1.5 2.2 Q1.5 1.2 2.5 1.2 H8.6 Q9.4 1.2 9.8 2 L10.6 3.7 H22 Q23 3.7 23 4.7 V18.6 H1.5 Z" fill="#fcf1cd" stroke="#d8b26a" stroke-width="1" stroke-linejoin="round"/><rect x="2.6" y="5.8" width="19.4" height="12" fill="url(#fg)"/><path d="M2.6 5.6 H22" stroke="#fff8e0" stroke-width="0.8"/></svg>
<span class="t" style="left:656.4px;top:638.02px;font-size:13.7px;line-height:16.44px;color:#333;font-family:'Liberation Sans',sans-serif;transform:scaleX(0.8858);">Glaccount</span>
<svg style="left:656px;top:658px;" width="11" height="10" viewBox="0 0 11 10"><path d="M0.8 3.4 C3.6 3.8 5.4 5.4 6.4 7.6 C5.6 8.6 4.6 9.2 3.4 9.4 C4.2 7.4 3 5 0.8 3.4 Z" fill="#3f63c9"/><circle cx="7.4" cy="3.6" r="2.9" fill="#e01b2f"/></svg>
<div style="left:669px;top:655.02px;width:132.4px;height:17.6px;overflow:hidden;"><span class="t" style="left:0;top:0;font-size:13px;line-height:15.6px;color:#5d92c6;font-family:'Liberation Sans',sans-serif;transform:scaleX(0.8449);">SAP BusinessObjects <span class="gt">&gt;</span> Uni</span></div>
<span class="t" style="left:819.4px;top:638.02px;font-size:13.7px;line-height:16.44px;color:#333;font-family:'Liberation Sans',sans-serif;transform:scaleX(0.8876);">GLAccount.AccountAmountAva...</span>
<svg style="left:624px;top:687.8px;" width="26" height="21" viewBox="0 0 26 21"><rect x="1.3" y="1.3" width="22.6" height="18.6" rx="1.6" fill="#fff" stroke="#111" stroke-width="2"/><path d="M1.3 7.6 H23.9 M8.8 7.6 V19.9 M16.4 7.6 V19.9" stroke="#111" stroke-width="2"/></svg>
<span class="t" style="left:656.4px;top:682.03px;font-size:13.7px;line-height:16.44px;color:#333;font-family:'Liberation Sans',sans-serif;transform:scaleX(0.8565);">GLAccount</span>
<svg style="left:656px;top:702.4px;" width="11" height="10" viewBox="0 0 11 10"><circle cx="5" cy="5" r="4" fill="none" stroke="#54565b" stroke-width="1.1"/><path d="M2.17 2.17 A4 4 0 0 1 7.83 7.83" fill="none" stroke="#009c4d" stroke-width="1.2"/><path d="M7.4 7.4 L9.8 9.6" stroke="#009c4d" stroke-width="1.3"/></svg>
<div style="left:669px;top:699.02px;width:133.6px;height:17.6px;overflow:hidden;"><span class="t" style="left:0;top:0;font-size:13px;line-height:15.6px;color:#5d92c6;font-family:'Liberation Sans',sans-serif;transform:scaleX(0.8662);">Qlik Sense <span class="gt">&gt;</span> Demo <span class="gt">&gt;</span> Finan</span></div>
<span class="t" style="left:819.4px;top:682.03px;font-size:13.7px;line-height:16.44px;color:#333;font-family:'Liberation Sans',sans-serif;font-style:italic;transform:scaleX(0.8622);">AccountAmountAvailable</span>
<svg style="left:624px;top:731.8px;" width="26" height="21" viewBox="0 0 26 21"><rect x="1.3" y="1.3" width="22.6" height="18.6" rx="1.6" fill="#fff" stroke="#111" stroke-width="2"/><path d="M1.3 7.6 H23.9 M8.8 7.6 V19.9 M16.4 7.6 V19.9" stroke="#111" stroke-width="2"/></svg>
<span class="t" style="left:656.4px;top:726.04px;font-size:13.7px;line-height:16.44px;color:#333;font-family:'Liberation Sans',sans-serif;transform:scaleX(0.8565);">GLAccount</span>
<svg style="left:656px;top:746.2px;" width="11" height="6" viewBox="0 0 11 6"><circle cx="5" cy="5" r="4" fill="none" stroke="#54565b" stroke-width="1.1"/><path d="M2.17 2.17 A4 4 0 0 1 7.83 7.83" fill="none" stroke="#009c4d" stroke-width="1.2"/><path d="M7.4 7.4 L9.8 9.6" stroke="#009c4d" stroke-width="1.3"/></svg>
<div style="left:669px;top:743.02px;width:133.6px;height:17.6px;overflow:hidden;"><span class="t" style="left:0;top:0;font-size:13px;line-height:15.6px;color:#5d92c6;font-family:'Liberation Sans',sans-serif;transform:scaleX(0.8662);clip-path:inset(0 0 6px 0);">Qlik Sense <span class="gt">&gt;</span> Demo <span class="gt">&gt;</span> Finan</span></div>
<span class="t" style="left:819.4px;top:726.04px;font-size:13.7px;line-height:16.44px;color:#333;font-family:'Liberation Sans',sans-serif;font-style:italic;transform:scaleX(0.8622);">AccountAmountAvailable</span>
<div class="edgeL"></div><div class="edgeR"></div>
</div></body></html>
